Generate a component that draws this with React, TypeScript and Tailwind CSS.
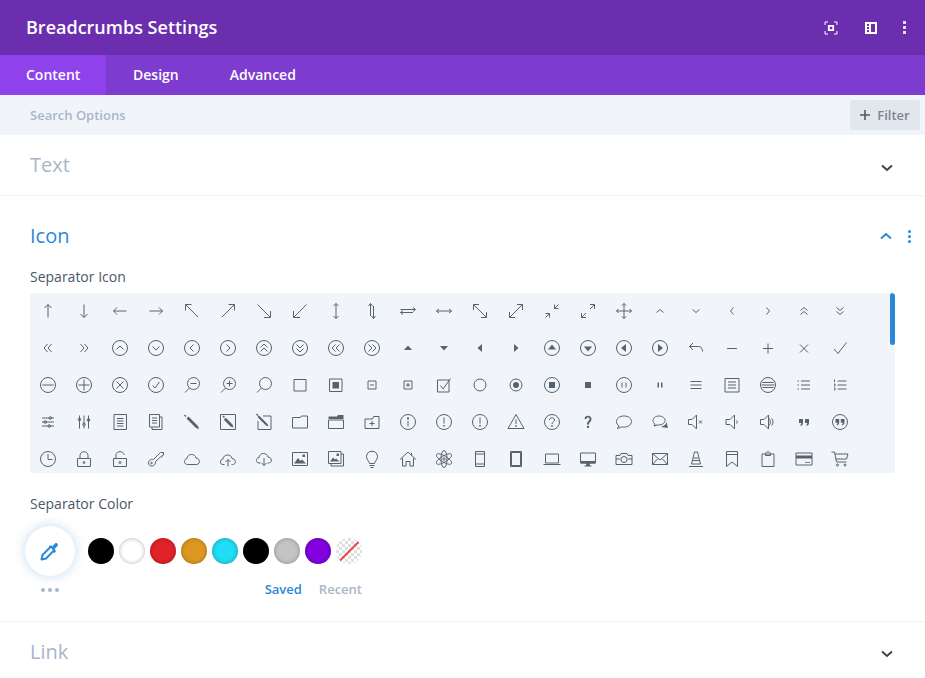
import React from 'react'

// circle as path so it can be mixed with the other strokes
const ci = (x: number, y: number, r: number) =>
  `M${x - r} ${y}a${r} ${r} 0 1 0 ${2 * r} 0a${r} ${r} 0 1 0 ${-2 * r} 0`
const C = ci(10, 10, 7.5)

type Glyph = [string, string?]

const rows: Glyph[][] = [
  [
    ['M10 3.5V16.5M6.5 7 10 3.5 13.5 7'],
    ['M10 3.5V16.5M6.5 13 10 16.5 13.5 13'],
    ['M3.5 10H16.5M7 6.5 3.5 10 7 13.5'],
    ['M3.5 10H16.5M13 6.5 16.5 10 13 13.5'],
    ['M3.5 3.5 16 16M3.5 9.5V3.5H9.5'],
    ['M16.5 3.5 4 16M10.5 3.5H16.5V9.5'],
    ['M3.5 3.5 16 16M16.5 10V16.5H10'],
    ['M16.5 3.5 4 16M3.5 10V16.5H10'],
    ['M10 2.5V17.5M7.5 5 10 2.5 12.5 5M7.5 15 10 17.5 12.5 15'],
    ['M8.5 2.5V15M6.5 5 8.5 2.5 10.5 5M11.5 5V17.5M9.5 15 11.5 17.5 13.5 15'],
    ['M2.5 8.5H17.5M15 6.5 17.5 8.5 15 10.5M2.5 11.5H15M5 9.5 2.5 11.5 5 13.5'],
    ['M2.5 10H17.5M5 8 2.5 10 5 12M15 8 17.5 10 15 12'],
    ['M3.5 3.5 16 16M3.5 9V3.5H9M16.5 11V16.5H11'],
    ['M16.5 3.5 4 16M11 3.5H16.5V9M3.5 11V16.5H9'],
    ['M3.5 16.5 7.5 12.5M3.5 12.5H7.5V16.5M16.5 3.5 12.5 7.5M12.5 3.5V7.5H16.5'],
    ['M8 12 3.5 16.5M3.5 12V16.5H8M12 8 16.5 3.5M12 3.5H16.5V8'],
    ['M10 2.5V17.5M2.5 10H17.5M8 4.5 10 2.5 12 4.5M8 15.5 10 17.5 12 15.5M4.5 8 2.5 10 4.5 12M15.5 8 17.5 10 15.5 12'],
    ['M6.5 11.5 10 8.5 13.5 11.5'],
    ['M6.5 8.5 10 11.5 13.5 8.5'],
    ['M11.5 6.5 8.5 10 11.5 13.5'],
    ['M8.5 6.5 11.5 10 8.5 13.5'],
    ['M6.5 9.5 10 6.5 13.5 9.5M6.5 13.5 10 10.5 13.5 13.5'],
    ['M6.5 6.5 10 9.5 13.5 6.5M6.5 10.5 10 13.5 13.5 10.5'],
  ],
  [
    ['M9.5 6 6 10 9.5 14M13.5 6 10 10 13.5 14'],
    ['M6.5 6 10 10 6.5 14M10.5 6 14 10 10.5 14'],
    [C + 'M6.5 11.5 10 8 13.5 11.5'],
    [C + 'M6.5 8.5 10 12 13.5 8.5'],
    [C + 'M11.5 6.5 8 10 11.5 13.5'],
    [C + 'M8.5 6.5 12 10 8.5 13.5'],
    [C + 'M6.5 9.5 10 6 13.5 9.5M6.5 13.5 10 10 13.5 13.5'],
    [C + 'M6.5 6.5 10 10 13.5 6.5M6.5 10.5 10 14 13.5 10.5'],
    [C + 'M9.5 6.5 6 10 9.5 13.5M13.5 6.5 10 10 13.5 13.5'],
    [C + 'M6.5 6.5 10 10 6.5 13.5M10.5 6.5 14 10 10.5 13.5'],
    ['', 'M10 7.5 14 12H6Z'],
    ['', 'M6 8H14L10 12.5Z'],
    ['', 'M12 6V14L7.5 10Z'],
    ['', 'M8 6V14L12.5 10Z'],
    [C, 'M10 6.5 14 11.5H6Z'],
    [C, 'M6 8.5H14L10 13.5Z'],
    [C, 'M12 6V14L7 10Z'],
    [C, 'M8 6V14L13 10Z'],
    ['M3.5 8.5H12.5C15 8.5 16.5 10.5 16.5 13.5M7 5 3.5 8.5 7 12'],
    ['M5 10.5H15'],
    ['M5 10.5H15M10 5.5V15.5'],
    ['M6 6.5 14 14.5M14 6.5 6 14.5'],
    ['M4 11 8 15.5 16.5 4.5'],
  ],
  [
    [C + 'M4.5 10H15.5'],
    [C + 'M4.5 10H15.5M10 4.5V15.5'],
    [C + 'M6.5 6.5 13.5 13.5M13.5 6.5 6.5 13.5'],
    [C + 'M6.5 10.5 9 13 13.5 7'],
    [ci(11.5, 8.5, 6) + 'M7.5 13 3 17.5M8.5 8.5H14.5'],
    [ci(11.5, 8.5, 6) + 'M7.5 13 3 17.5M8.5 8.5H14.5M11.5 5.5V11.5'],
    [ci(11.5, 8.5, 6) + 'M7.5 13 3 17.5'],
    ['M4 4.5H16V16H4Z'],
    ['M3.5 4H16V16.5H3.5Z', 'M6.5 7H13V13.5H6.5Z'],
    ['M6 6H14V14H6ZM8 10H12'],
    ['M6 6H14V14H6ZM8 10H12M10 8V12'],
    ['M3.5 5H15V17H3.5ZM6.5 10.5 9 14 16.5 3.5'],
    [ci(10, 10, 6)],
    [ci(10, 10, 6), ci(10, 10, 3)],
    [C, 'M7 7H13V13H7Z'],
    ['', 'M7 7H13V13H7Z'],
    [C + 'M8 7.5V12.5M12 7.5V12.5'],
    ['', 'M7.5 7.5H9V12.5H7.5ZM11 7.5H12.5V12.5H11Z'],
    ['M4.5 6.5H15.5M4.5 10H15.5M4.5 13.5H15.5'],
    ['M3 3.5H17V17H3ZM6 7H14M6 10H14M6 13H14'],
    [C + 'M4.5 7.5H15.5M3.5 10H16.5M4.5 12.5H15.5'],
    ['M7 6H16M7 10H16M7 14H16M3.5 6H5M3.5 10H5M3.5 14H5'],
    ['M7.5 6H16.5M7.5 10H16.5M7.5 14H16.5M4.5 4.5V7M4 9H5V11H4M4 13H5V15H4'],
  ],
  [
    ['M4 6H16M4 10H16M4 14H16' + ci(12.3, 6, 1.3) + ci(7.3, 10, 1.3) + ci(11.3, 14, 1.3)],
    ['M5.5 3.5V16.5M10 3.5V16.5M14.5 3.5V16.5' + ci(5.5, 7.5, 1.3) + ci(10, 12.5, 1.3) + ci(14.5, 8, 1.3)],
    ['M4 2.5H16.5V17.5H4ZM7 6.5H13.5M7 9H13.5M7 11.5H13.5M7 14H13.5'],
    ['M3.5 2.5H13.5L13.5 15H3.5ZM13.5 5H16V17.5H6V15M6 6H11M6 8.5H11M6 11H11'],
    ['', 'M3 2.5 4.5 4 3.5 5 2 3.5ZM6.5 4.5 16 14 17 17 14 16 4.5 6.5Z'],
    ['M2.5 2.5H17.5V17.5H2.5Z', 'M4.5 4.5 5.5 3.5 7 5 6 6ZM7.8 5.8 14.5 12.5 15.5 15.5 12.5 14.5 5.8 7.8Z'],
    ['M9 4H17V17.5H4V9', 'M2 2.5 3 1.5 4.5 3 3.5 4ZM5 3.5 13.5 12 14.5 14.5 12 13.5 3.5 5Z'],
    ['M2.5 5.5H10.5L11.5 4H17.5V16H2.5Z'],
    ['M2.5 8H17.5V16.5H2.5Z', 'M2.5 4.5H11L12 3H17.5V7H2.5Z'],
    ['M3 7H10.5L11.5 4.5H17V16.5H3ZM10 9V14M7.5 11.5H12.5'],
    [ci(10, 10, 7.5) + 'M10 9V14.5', 'M9 5.5H11V7.5H9Z'],
    [ci(10, 10, 7.5) + 'M10 5.5V11.5', 'M9.2 13H10.8V14.5H9.2Z'],
    [ci(10, 10, 7.5) + 'M10 5.5V11.5', 'M9.2 13H10.8V14.5H9.2Z'],
    ['M10 2.5 18 16.5H2ZM10 7.5V12', 'M9.2 13.2H10.8V14.8H9.2Z'],
    [C + 'M7.5 8C7.5 5 12.5 5 12.5 8C12.5 10 10 10 10 12', 'M9.2 13.2H10.8V14.8H9.2Z'],
    ['', 'M6.5 7C6.5 2.5 13.5 2.5 13.5 7C13.5 10 11 10 11 12.5H9C9 9 11.5 9 11.5 7C11.5 5 8.5 5 8.5 7ZM9 13.8H11V16H9Z'],
    ['M10 4C5.5 4 2.5 6.5 2.5 9.5C2.5 11.5 3.5 13 5 14L3.5 16.5 7.5 15C12.5 15.8 17.5 13.5 17.5 9.5C17.5 6.5 14.5 4 10 4Z'],
    ['M9 4C5.5 4 3 6 3 8.5C3 10 3.8 11 5 12L4 14 7 13C11 13.5 15 11.5 15 8.5C15 6 12.5 4 9 4Z', 'M16.5 10 18 16 11 15 15 13Z'],
    ['M2.5 7.5H6L10.5 3V17L6 12.5H2.5ZM13 8.5 16 11.5M16 8.5 13 11.5'],
    ['M4 7.5H8L12.5 3V17L8 12.5H4ZM14.5 8.5 15.5 10 14.5 11.5'],
    ['M2.5 7.5H6L10.5 3V17L6 12.5H2.5ZM10.5 6C13 7.5 13 12.5 10.5 14M13.5 6.5C15.5 8 15.5 12 13.5 13.5'],
    ['', 'M5 7H9V11C9 12.5 8 13.5 6.5 14V12.5C7 12.3 7.2 12 7.2 11H5ZM11 7H15V11C15 12.5 14 13.5 12.5 14V12.5C13 12.3 13.2 12 13.2 11H11Z'],
    [C, 'M5.5 7H9.2V10.5C9.2 12 8.3 13 6.8 13.5V12.2C7.3 12 7.5 11.7 7.5 10.8H5.5ZM10.8 7H14.5V10.5C14.5 12 13.6 13 12.1 13.5V12.2C12.6 12 12.8 11.7 12.8 10.8H10.8Z'],
  ],
  [
    [C + 'M10 5V10.5H14.5'],
    ['M3.5 9.5H16.5V17.5H3.5ZM6 9.5V6.5C6 1.5 14 1.5 14 6.5V9.5' + ci(10, 13.5, 1)],
    ['M3.5 9.5H16.5V17.5H3.5ZM6 9.5V6C6 1.5 14 1.5 14 6' + ci(10, 13.5, 1)],
    ['M2.5 14C2.5 11.5 5 9.5 7.5 10.5L14.5 3.5H17.5V6L16 6.5V8H14.5L9.5 12.5C10 15 8 17 6 17C4 17 2.5 16 2.5 14Z' + ci(5.5, 14, .8)],
    ['M5.5 15.5C1.5 15.5 1.5 10 5 9.5C5.5 4.5 13 4 14 9C18.5 9.5 18.5 15.5 14.5 15.5Z'],
    ['M6.5 15.5H5C1.5 15.5 1.5 10.5 5 10C5.5 5 13 4.5 14 9.5C18.5 10 18.5 15.5 14.5 15.5H13.5M10 17.5V10.5M7.5 13 10 10.5 12.5 13'],
    ['M6.5 14H5C1.5 14 1.5 9 5 8.5C5.5 3.5 13 3 14 8C18.5 8.5 18.5 14 14.5 14H13.5M10 9V16.5M7.5 14 10 16.5 12.5 14'],
    ['M2.5 3.5H17.5V16.5H2.5Z', 'M4 14.5 8 9 10.5 12 12 10.5 16 14.5ZM12.5 5.5H15V8H12.5Z'],
    ['M2.5 2.5H15V14.5H2.5ZM15 5H17.5V17H5V14.5', 'M4 12.5 7 8.5 9 10.5 10 9.5 13.5 12.5ZM10.5 4.5H13V7H10.5Z'],
    ['M7.5 14.5C7.5 12.5 4.5 11 4.5 7.5C4.5 .5 15.5 .5 15.5 7.5C15.5 11 12.5 12.5 12.5 14.5ZM7.5 16.5H12.5M8.5 18.5H11.5'],
    ['M2 10.5 10 3 18 10.5M4.5 9V17H8V12.5H12V17H15.5V9M13.5 4V7'],
    [ci(10, 10, 1.2) + 'M10 1.5C6 1.5 6 18.5 10 18.5C14 18.5 14 1.5 10 1.5ZM2.5 5.5C.5 9 15.5 18 17.5 14.5C19.5 11 4.5 2 2.5 5.5ZM17.5 5.5C15.5 2 .5 11 2.5 14.5C4.5 18 19.5 9 17.5 5.5Z'],
    ['M5.5 2.5H14.5V17.5H5.5ZM5.5 5H14.5M5.5 15H14.5'],
    ['M4.5 2.5H15.5V17.5H4.5ZM5.5 3.5H14.5V16.5H5.5Z'],
    ['M3.5 5H16.5V14H3.5ZM1.5 15.5H18.5'],
    ['M2.5 4H17.5V14H2.5Z', 'M2.5 12H17.5V14.5H2.5ZM8.5 14.5H11.5L12 16.5H8Z M6.5 16.5H13.5V17.5H6.5Z'],
    ['M2 6.5H6L7 4.5H13L14 6.5H18V15.5H2ZM2 10H6.5M13.5 10H18' + ci(10, 10.5, 3)],
    ['M2.5 4.5H17.5V15.5H2.5ZM2.5 4.5 10 11 17.5 4.5M2.5 15.5 8 9.5M17.5 15.5 12 9.5'],
    ['M3 17.5H17M5.5 15 8.5 3H11.5L14.5 15ZM7.5 9H12.5M7 11.5H13'],
    ['M4.5 2.5H15.5V17.5L10 13 4.5 17.5ZM4.5 5.5H15.5'],
    ['M4 5H16V17.5H4ZM7.5 5C8 2 12 2 12.5 5V6.5H7.5Z'],
    ['M2 4H18V16H2Z', 'M2 6.5H18V9.5H2ZM11 13H16V13.8H11Z'],
    ['M1.5 3H4.5L6.5 13H16.5M5 5H18L16.5 10H6' + ci(7.5, 16, 1) + ci(15, 16, 1)],
  ],
]

const Icon = ({ glyph }: { glyph: Glyph }) => (
  <svg viewBox="0 0 20 20" className="w-[20px] h-[20px] text-[#566270]" fill="none">
    {glyph[0] && <path d={glyph[0]} stroke="currentColor" strokeWidth="1" />}
    {glyph[1] && <path d={glyph[1]} fill="currentColor" />}
  </svg>
)

const Chevron = ({ up, blue }: { up?: boolean; blue?: boolean }) => (
  <svg viewBox="0 0 12 8" className={`w-[12px] h-[8px] ${blue ? 'text-[#2b87da]' : 'text-[#3c434b]'}`} fill="none">
    <path d={up ? 'M1 6.5 6 2 11 6.5' : 'M1 1.5 6 6 11 1.5'} stroke="currentColor" strokeWidth="2" />
  </svg>
)

const Closed = ({ title, border }: { title: string; border?: boolean }) => (
  <div className={`flex items-center justify-between pl-[30px] pr-[32px] h-[60px] ${border ? 'border-b border-[#f1f3f5] box-content' : ''}`}>
    <h3 className="text-[20px] text-[#a9b6c8] font-normal">{title}</h3>
    <div className={border ? 'mt-[6px]' : 'mt-[3px]'}><Chevron /></div>
  </div>
)

const swatches = ['bg-black', 'bg-white', 'bg-[#e02329]', 'bg-[#dd9822]', 'bg-[#21dcf5]', 'bg-black', 'bg-[#c4c4c4]', 'bg-[#8300e0]']

const App = () => {
  return (
    <div className="w-[925px] h-[678px] overflow-hidden bg-white font-['Open_Sans',sans-serif]">
      <div className="h-[55px] bg-[#6b2eae] flex items-center justify-between pl-[26px]">
        <h1 className="text-[18px] font-semibold text-white">Breadcrumbs Settings</h1>
        <div className="flex items-center">
          <svg viewBox="0 0 14 14" className="w-[14px] h-[14px] mr-[26px] text-white" fill="none">
            <path d="M1 4V1H4M10 1H13V4M13 10V13H10M4 13H1V10" stroke="currentColor" strokeWidth="1" />
            <path d="M4.8 4.8H9.2V9.2H4.8Z" stroke="currentColor" strokeWidth="1.8" />
          </svg>
          <svg viewBox="0 0 14 14" className="w-[14px] h-[14px] mr-[25px] text-white" fill="none">
            <path fillRule="evenodd" d="M1 1H13V13H1ZM7 3V11H11V3ZM3 3V5H5V3ZM3 6V8H5V6ZM3 9V11H5V9Z" fill="currentColor" />
          </svg>
          <div className="flex flex-col gap-[2px] mr-[19px]">
            <span className="w-[3px] h-[3px] bg-[#e6dcf2]" />
            <span className="w-[3px] h-[3px] bg-[#e6dcf2]" />
            <span className="w-[3px] h-[3px] bg-[#e6dcf2]" />
          </div>
        </div>
      </div>

      <div className="h-[40px] bg-[#7d3bcf] flex text-[14px] font-semibold text-white pb-[1px]">
        <div className="w-[106px] -mb-[1px] bg-[#8f42ec] pl-[26px] pb-[1px] flex items-center">Content</div>
        <div className="pl-[27px] flex items-center">Design</div>
        <div className="pl-[51px] flex items-center">Advanced</div>
      </div>

      <div className="h-[40px] bg-[#f1f5f9] flex items-center justify-between pl-[30px] pr-[5px]">
        <span className="text-[13px] font-semibold text-[#a9b6c8] mt-[1px]">Search Options</span>
        <button className="w-[70px] h-[30px] bg-[#e2e7ed] rounded-[3px] flex items-center justify-center gap-[7px] text-[13px] font-semibold text-[#7a8591]">
          <svg viewBox="0 0 10 10" className="w-[10px] h-[10px] text-[#4f5b69]" fill="none">
            <path d="M5 0V10M0 5H10" stroke="currentColor" strokeWidth="1.6" />
          </svg>
          <span className="mt-[1px]">Filter</span>
        </button>
      </div>

      <Closed title="Text" border />

      <div className="h-[425px] border-b border-[#f1f3f5] box-content">
        <div className="flex items-center justify-between pl-[30px] pr-[14px] pt-[26px]">
          <h3 className="text-[20px] leading-[28px] text-[#2b87da] font-normal">Icon</h3>
          <div className="flex items-center gap-[16px]">
            <Chevron up blue />
            <div className="flex flex-col gap-[2px]">
              <span className="w-[3px] h-[3px] rounded-full bg-[#2b87da]" />
              <span className="w-[3px] h-[3px] rounded-full bg-[#2b87da]" />
              <span className="w-[3px] h-[3px] rounded-full bg-[#2b87da]" />
            </div>
          </div>
        </div>

        <div className="pl-[30px] pr-[30px] mt-[18px]">
          <p className="text-[14px] leading-[18px] font-medium text-[#4c5866]">Separator Icon</p>
          <div className="relative mt-[7px] h-[180px] bg-[#f1f5f9] rounded-[3px] overflow-hidden">
            <div className="grid grid-cols-[repeat(23,36px)] auto-rows-[37px] -mt-[1px]">
              {rows.flat().map((g, i) => (
                <div key={i} className="flex items-center justify-center">
                  <Icon glyph={g} />
                </div>
              ))}
            </div>
            <div className="absolute right-0 top-0 w-[5px] h-[52px] bg-[#2b87da] rounded-[3px]" />
          </div>

          <p className="mt-[22px] text-[14px] leading-[18px] font-medium text-[#4c5866]">Separator Color</p>
        </div>

        <div className="flex items-center pl-[25px] mt-[13px]">
          <div className="w-[50px] h-[50px] rounded-full bg-white shadow-[0_0_12px_rgba(43,135,218,0.3)] flex items-center justify-center">
            <svg viewBox="0 0 24 24" className="w-[24px] h-[24px] text-[#2b87da]" fill="none">
              <path d="M13 7.5 4.5 16 3.5 20.5 8 19.5 16.5 11Z" stroke="currentColor" strokeWidth="2" strokeLinejoin="round" />
              <path d="M11.5 6 18 12.5 16.5 14 15 12.5 14.5 9 11 8Z M14 7.5 17 4.5C18.5 3 21 5.5 19.5 7L16.5 10Z" fill="currentColor" />
            </svg>
          </div>
          <div className="flex gap-[5px] ml-[13px]">
            {swatches.map((c, i) => (
              <span key={i} className={`w-[26px] h-[26px] rounded-full ${c} shadow-[inset_0_0_4px_rgba(0,0,0,0.3)]`} />
            ))}
            <svg viewBox="0 0 26 26" className="w-[26px] h-[26px]">
              <defs>
                <pattern id="chk" width="6" height="6" patternUnits="userSpaceOnUse">
                  <rect width="6" height="6" fill="#fff" />
                  <rect width="3" height="3" fill="#dfdfdf" />
                  <rect x="3" y="3" width="3" height="3" fill="#dfdfdf" />
                </pattern>
              </defs>
              <circle cx="13" cy="13" r="13" fill="url(#chk)" />
              <path d="M4 22.5 22.5 4" stroke="#f0434f" strokeWidth="2" />
            </svg>
          </div>
        </div>

        <div className="flex items-center pl-[41px] pr-[563px] mt-[4px] justify-between">
          <div className="flex gap-[3px]">
            <span className="w-[4px] h-[4px] rounded-full bg-[#a9b6c8]" />
            <span className="w-[4px] h-[4px] rounded-full bg-[#a9b6c8]" />
            <span className="w-[4px] h-[4px] rounded-full bg-[#a9b6c8]" />
          </div>
          <div className="flex gap-[17px] text-[13px] font-semibold">
            <span className="text-[#2b87da]">Saved</span>
            <span className="text-[#a9b6c8]">Recent</span>
          </div>
        </div>
      </div>

      <Closed title="Link" />
    </div>
  )
}

export default App
